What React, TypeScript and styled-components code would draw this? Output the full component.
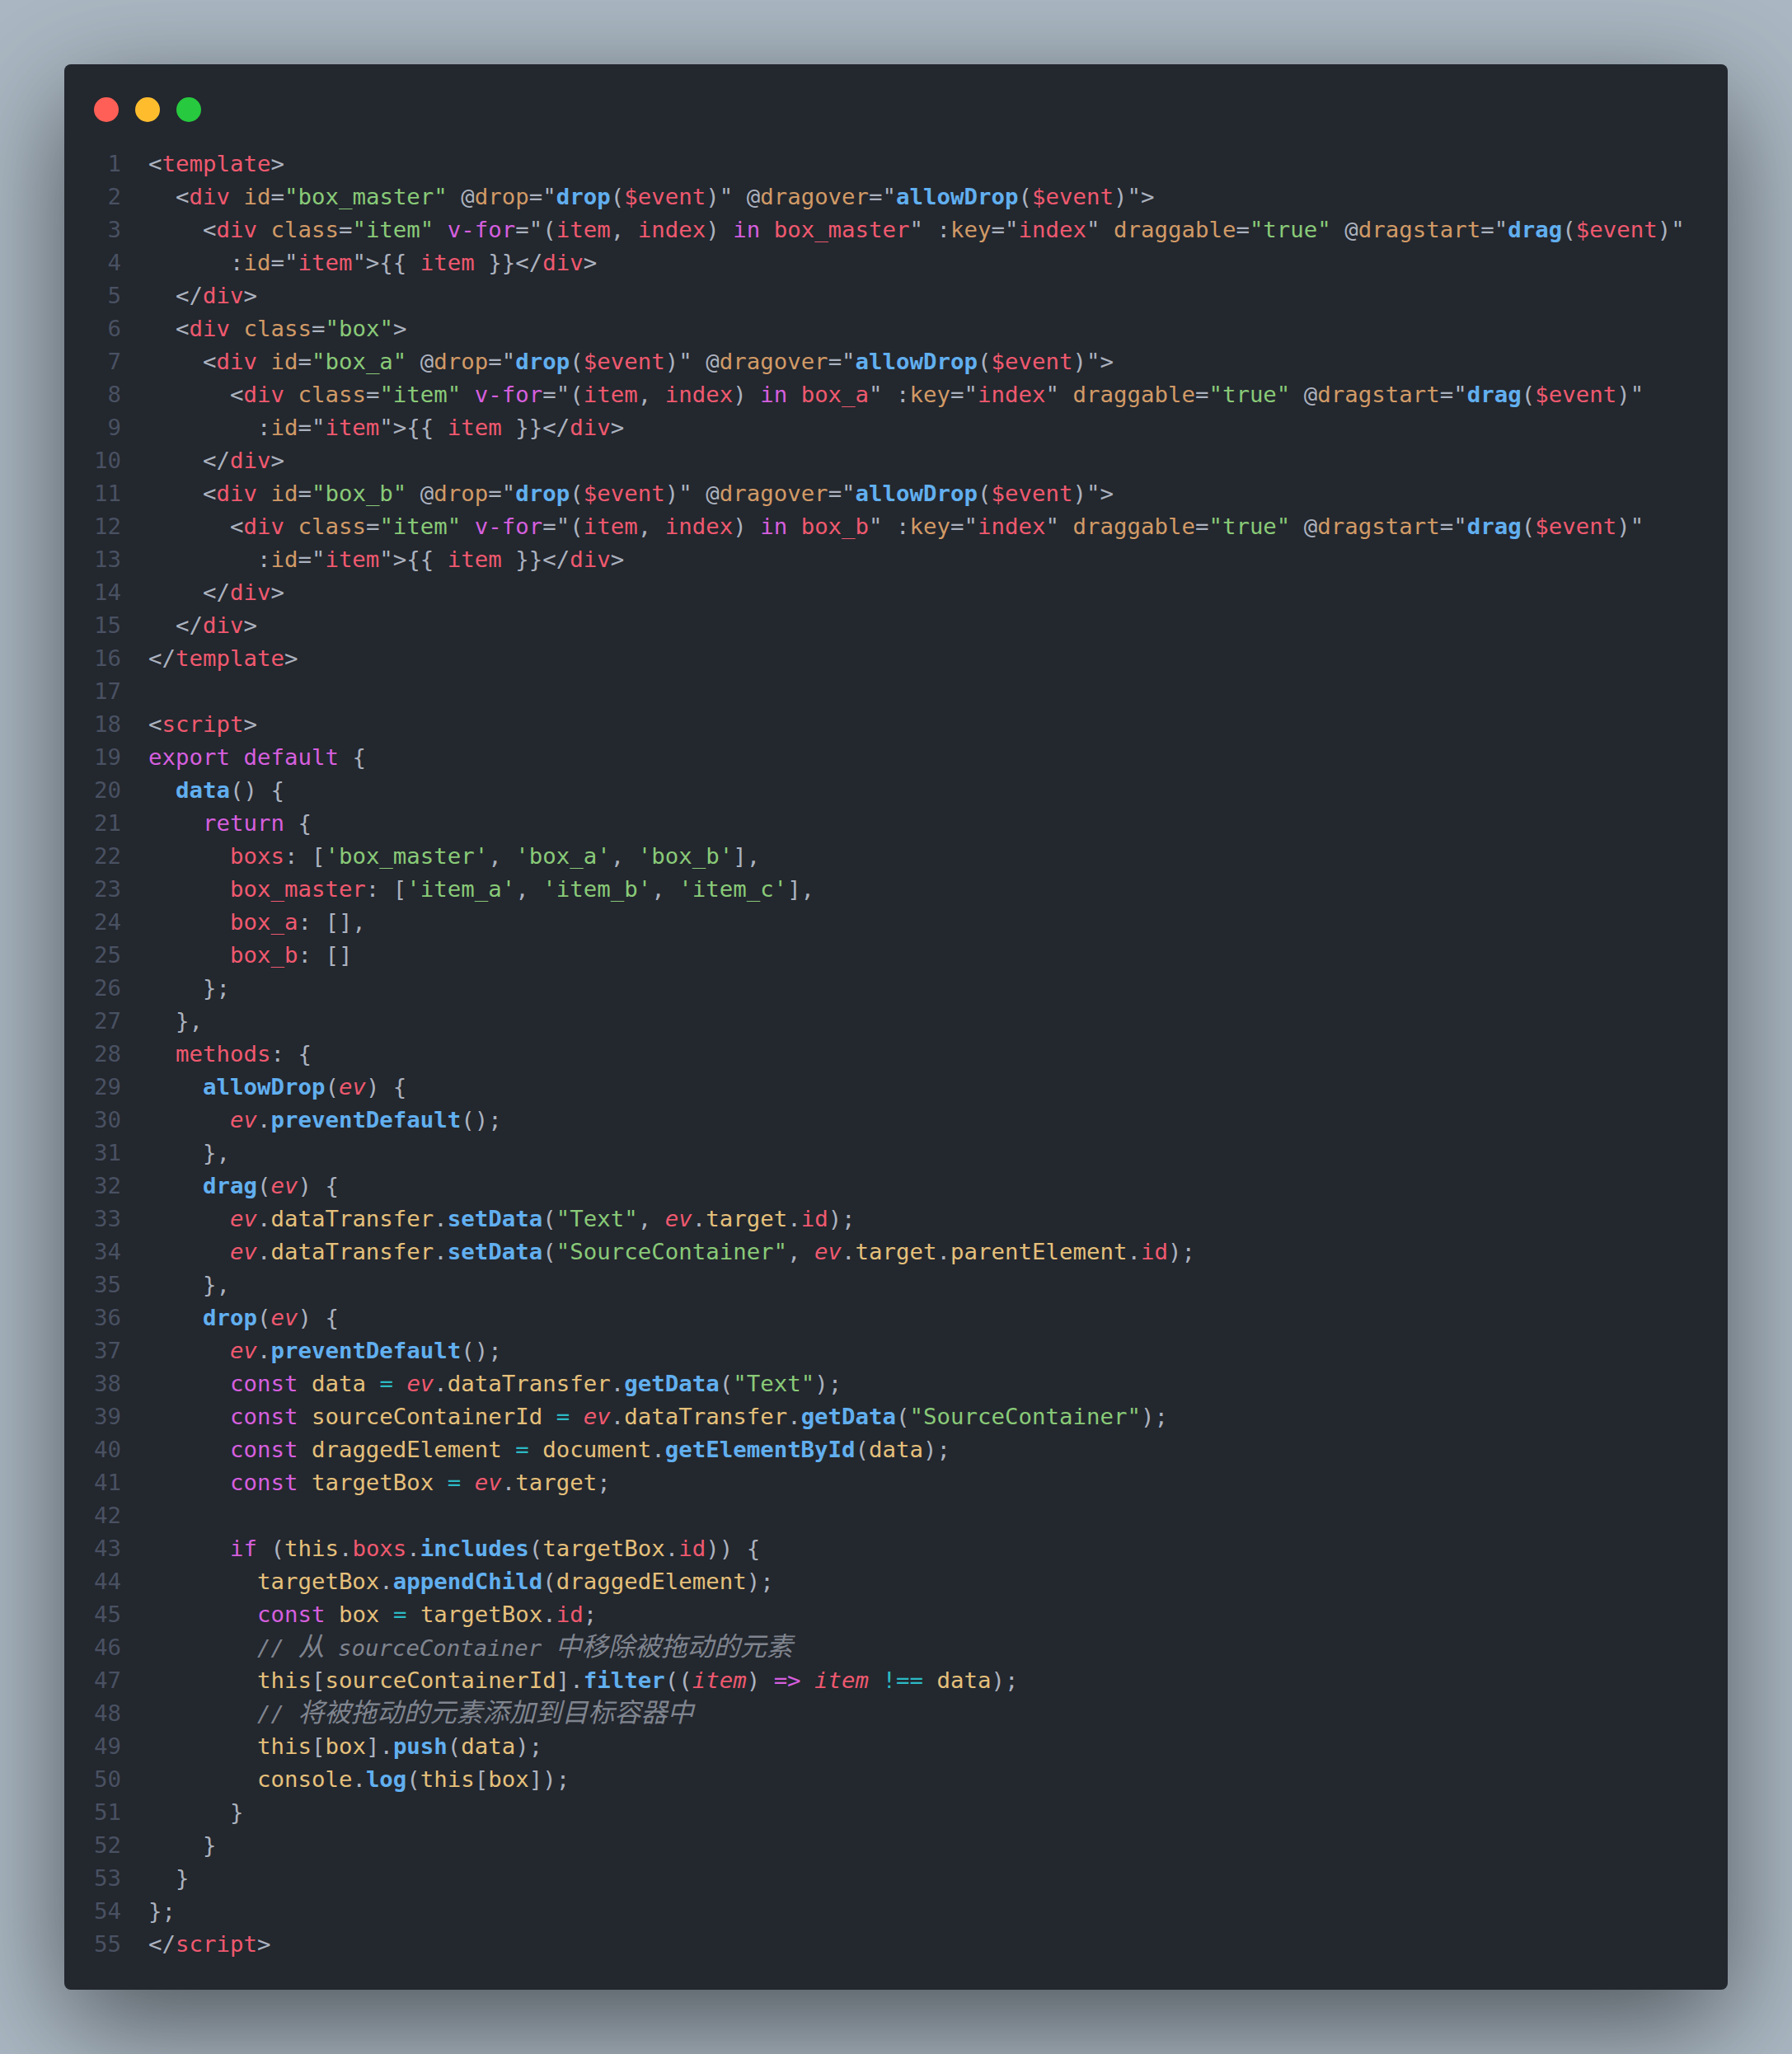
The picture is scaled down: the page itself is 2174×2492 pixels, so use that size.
import React from "react";
import styled, { createGlobalStyle } from "styled-components";

const Global = createGlobalStyle`
  html, body { margin: 0; padding: 0; background: #abb8c3; }
`;

const Page = styled.div`
  width: 2174px;
  height: 2492px;
  box-sizing: border-box;
  padding: 78px;
  background: #abb8c3;
  overflow: hidden;
`;

const Card = styled.div`
  height: 2336px;
  box-sizing: border-box;
  padding: 40px 36px 35px;
  background: #23272e;
  border-radius: 8px;
  box-shadow: rgba(0, 0, 0, 0.55) 0 40px 136px;
`;

const Controls = styled.div`
  display: flex;
  gap: 20px;
  height: 30px;
  margin-bottom: 31px;
`;

const Dot = styled.span<{ $color: string }>`
  width: 30px;
  height: 30px;
  border-radius: 50%;
  background: ${(p) => p.$color};
`;

const Code = styled.div`
  display: flex;
  flex-direction: column;
  font-family: "DejaVu Sans Mono", monospace;
  font-size: 27.4px;
  line-height: 40px;
  color: #abb2bf;
`;

const Row = styled.div`
  display: flex;
  height: 40px;
  white-space: pre;
`;

const LineNo = styled.span`
  flex: 0 0 33px;
  text-align: right;
  margin-right: 33px;
  color: #495162;
`;

const colors: Record<string, string> = {
  r: "#ef596f",
  o: "#d19a66",
  g: "#89ca78",
  b: "#61afef",
  m: "#d55fde",
  y: "#e5c07b",
  t: "#2bbac5",
  i: "#ef596f",
  c: "#7f848e",
  j: "#7f848e",
};

const Token = styled.span<{ $kind: string }>`
  color: ${(p) => colors[p.$kind]};
  font-weight: ${(p) => (p.$kind === "b" ? 700 : 400)};
  font-style: ${(p) => ("icj".includes(p.$kind) ? "italic" : "normal")};
  font-family: ${(p) =>
    p.$kind === "j" ? '"Noto Sans CJK SC", sans-serif' : "inherit"};
  font-size: ${(p) => (p.$kind === "j" ? "32px" : "inherit")};
  line-height: ${(p) => (p.$kind === "j" ? "1" : "inherit")};
`;

const itemLine = (indent: string, box: string) =>
  `${indent}<‹r|div› ‹o|class›=‹g|"item"› ‹m|v-for›="(‹r|item›, ‹r|index›) ‹m|in› ‹r|${box}›" :‹o|key›="‹r|index›" ‹o|draggable›=‹g|"true"› @‹o|dragstart›="‹b|drag›(‹r|$event›)"`;
const idLine = (indent: string) =>
  `${indent}:‹o|id›="‹r|item›">{{ ‹r|item› }}</‹r|div›>`;
const boxLine = (indent: string, id: string) =>
  `${indent}<‹r|div› ‹o|id›=‹g|"${id}"› @‹o|drop›="‹b|drop›(‹r|$event›)" @‹o|dragover›="‹b|allowDrop›(‹r|$event›)">`;

const source: string[] = [
  "<‹r|template›>",
  boxLine("  ", "box_master"),
  itemLine("    ", "box_master"),
  idLine("      "),
  "  </‹r|div›>",
  "  <‹r|div› ‹o|class›=‹g|\"box\"›>",
  boxLine("    ", "box_a"),
  itemLine("      ", "box_a"),
  idLine("        "),
  "    </‹r|div›>",
  boxLine("    ", "box_b"),
  itemLine("      ", "box_b"),
  idLine("        "),
  "    </‹r|div›>",
  "  </‹r|div›>",
  "</‹r|template›>",
  "",
  "<‹r|script›>",
  "‹m|export› ‹m|default› {",
  "  ‹b|data›() {",
  "    ‹m|return› {",
  "      ‹r|boxs›: [‹g|'box_master'›, ‹g|'box_a'›, ‹g|'box_b'›],",
  "      ‹r|box_master›: [‹g|'item_a'›, ‹g|'item_b'›, ‹g|'item_c'›],",
  "      ‹r|box_a›: [],",
  "      ‹r|box_b›: []",
  "    };",
  "  },",
  "  ‹r|methods›: {",
  "    ‹b|allowDrop›(‹i|ev›) {",
  "      ‹i|ev›.‹b|preventDefault›();",
  "    },",
  "    ‹b|drag›(‹i|ev›) {",
  "      ‹i|ev›.‹y|dataTransfer›.‹b|setData›(‹g|\"Text\"›, ‹i|ev›.‹y|target›.‹r|id›);",
  "      ‹i|ev›.‹y|dataTransfer›.‹b|setData›(‹g|\"SourceContainer\"›, ‹i|ev›.‹y|target›.‹y|parentElement›.‹r|id›);",
  "    },",
  "    ‹b|drop›(‹i|ev›) {",
  "      ‹i|ev›.‹b|preventDefault›();",
  "      ‹m|const› ‹y|data› ‹t|=› ‹i|ev›.‹y|dataTransfer›.‹b|getData›(‹g|\"Text\"›);",
  "      ‹m|const› ‹y|sourceContainerId› ‹t|=› ‹i|ev›.‹y|dataTransfer›.‹b|getData›(‹g|\"SourceContainer\"›);",
  "      ‹m|const› ‹y|draggedElement› ‹t|=› ‹y|document›.‹b|getElementById›(‹y|data›);",
  "      ‹m|const› ‹y|targetBox› ‹t|=› ‹i|ev›.‹y|target›;",
  "",
  "      ‹m|if› (‹y|this›.‹r|boxs›.‹b|includes›(‹y|targetBox›.‹r|id›)) {",
  "        ‹y|targetBox›.‹b|appendChild›(‹y|draggedElement›);",
  "        ‹m|const› ‹y|box› ‹t|=› ‹y|targetBox›.‹r|id›;",
  "        ‹c|// ›‹j|从›‹c| sourceContainer ›‹j|中移除被拖动的元素›",
  "        ‹y|this›[‹y|sourceContainerId›].‹b|filter›((‹i|item›) ‹m|=>› ‹i|item› ‹t|!==› ‹y|data›);",
  "        ‹c|// ›‹j|将被拖动的元素添加到目标容器中›",
  "        ‹y|this›[‹y|box›].‹b|push›(‹y|data›);",
  "        ‹y|console›.‹b|log›(‹y|this›[‹y|box›]);",
  "      }",
  "    }",
  "  }",
  "};",
  "</‹r|script›>",
];

const renderLine = (line: string) =>
  line.split(/(‹\w\|[^›]*›)/).map((part, i) => {
    const m = part.match(/^‹(\w)\|([^›]*)›$/);
    if (m) return <Token key={i} $kind={m[1]}>{m[2]}</Token>;
    return part;
  });

export default function App() {
  return (
    <Page>
      <Global />
      <Card>
        <Controls>
          <Dot $color="#ff5f56" />
          <Dot $color="#ffbd2e" />
          <Dot $color="#27c93f" />
        </Controls>
        <Code>
          {source.map((line, i) => (
            <Row key={i}>
              <LineNo>{i + 1}</LineNo>
              <span>{renderLine(line)}</span>
            </Row>
          ))}
        </Code>
      </Card>
    </Page>
  );
}
